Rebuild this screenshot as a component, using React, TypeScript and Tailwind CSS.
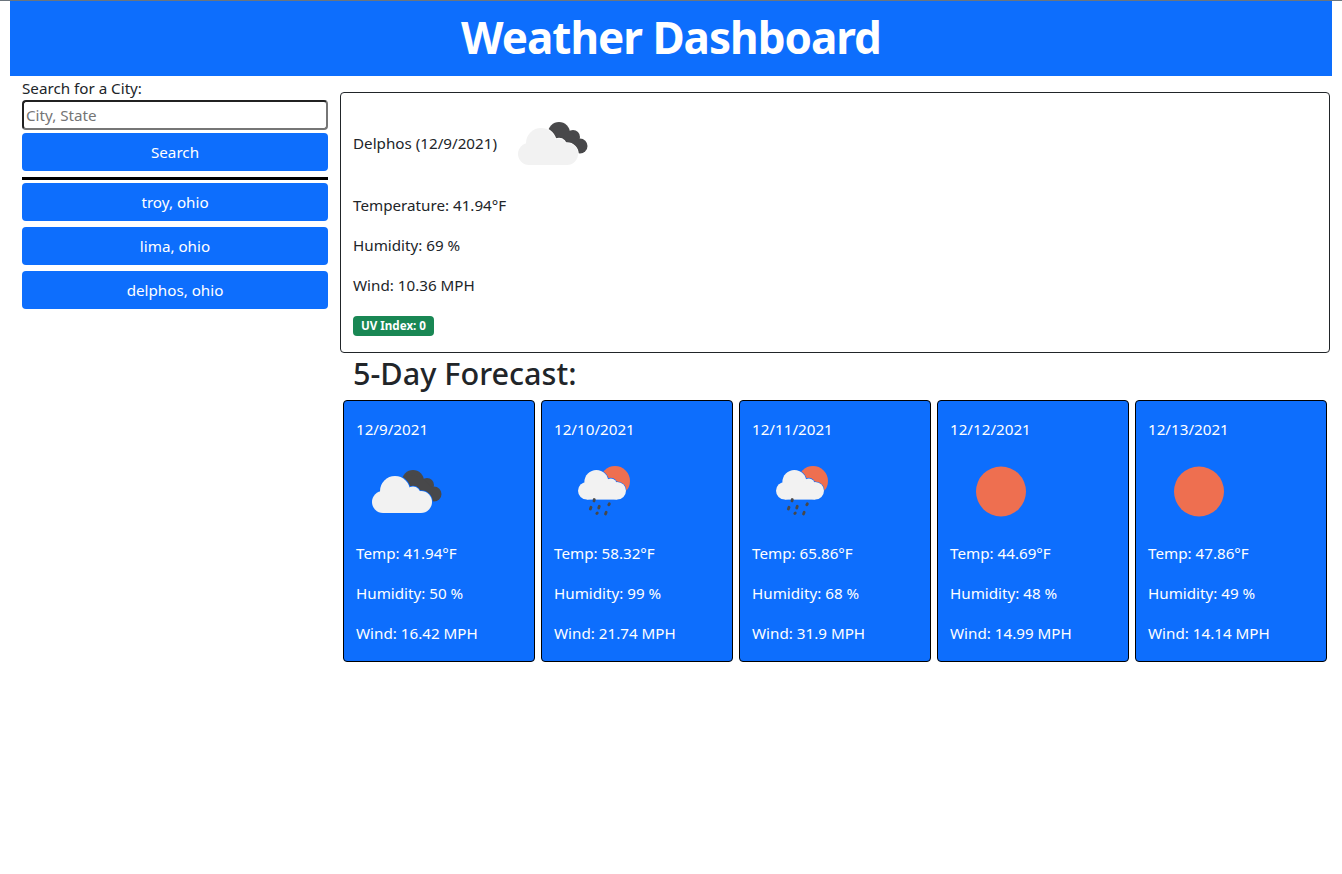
const font = "[font-family:'Noto_Sans','Open_Sans',sans-serif]";

const FORECAST = [
  { date: '12/9/2021', icon: 'clouds', temp: '41.94', humidity: '50', wind: '16.42' },
  { date: '12/10/2021', icon: 'rain', temp: '58.32', humidity: '99', wind: '21.74' },
  { date: '12/11/2021', icon: 'rain', temp: '65.86', humidity: '68', wind: '31.9' },
  { date: '12/12/2021', icon: 'sun', temp: '44.69', humidity: '48', wind: '14.99' },
  { date: '12/13/2021', icon: 'sun', temp: '47.86', humidity: '49', wind: '14.14' },
];

const CITIES = ['troy, ohio', 'lima, ohio', 'delphos, ohio'];

// white cloud, drawn twice: once fat in the background colour for the gap
function CloudShape({ fill, stroke = 0 }: { fill: string; stroke?: number }) {
  return (
    <g fill={fill} stroke={stroke ? fill : 'none'} strokeWidth={stroke}>
      <circle cx="27" cy="61" r="11" />
      <circle cx="39" cy="50" r="15" />
      <circle cx="57" cy="53" r="7.500" />
      <circle cx="65" cy="61" r="11" />
      <rect x="27" y="55" width="38" height="17" />
    </g>
  );
}

function WeatherIcon({ kind, bg }: { kind: string; bg: string }) {
  if (kind === 'sun') {
    return (
      <svg viewBox="0 0 100 100" className="w-[100px] h-[100px] shrink-0">
        <circle cx="51" cy="50.500" r="25" fill="#EE6F50" />
      </svg>
    );
  }
  if (kind === 'rain') {
    return (
      <svg viewBox="0 0 100 100" className="w-[100px] h-[100px] shrink-0">
        <circle cx="61" cy="40" r="15" fill="#EE6F50" />
        <g transform="translate(11.200 1) scale(0.8)">
          <CloudShape fill={bg} stroke={1.500} />
          <CloudShape fill="#F2F2F2" />
        </g>
        <g stroke="#48484A" strokeWidth="2.800" strokeLinecap="round">
          <path d="M40.300 58.500 40 60" />
          <path d="M37 66.300 36.400 68" />
          <path d="M45.300 65.300 44.700 67" />
          <path d="M55.300 62.800 54.800 63.800" />
          <path d="M43.300 72 42.800 72.500" />
          <path d="M52.200 71.300 51.500 73" />
        </g>
      </svg>
    );
  }
  return (
    <svg viewBox="0 0 100 100" className="w-[100px] h-[100px] shrink-0">
      <g fill="#48484A">
        <circle cx="57" cy="40" r="11" />
        <circle cx="71" cy="44" r="7" />
        <circle cx="78" cy="53" r="7.500" />
        <path d="M50 33 65 36 76 46 78 60 60 55z" />
      </g>
      <CloudShape fill={bg} stroke={1.500} />
      <CloudShape fill="#F2F2F2" />
    </svg>
  );
}

export default function App() {
  return (
    <div className={`min-h-screen bg-white text-[#212529] text-[15.2px] leading-6 ${font}`}>
      <div className="h-px bg-[#6c757d]" />
      <header className="mx-[10px] h-[75px] pb-[3px] bg-[#0D6EFD] flex items-center justify-center">
        <h1 className="text-[44px] tracking-[-1px] font-bold text-white leading-none">Weather Dashboard</h1>
      </header>

      <div className="mx-[10px] flex">
        {/* search column */}
        <aside className="w-[330px] shrink-0 px-3">
          <label className="block h-[24px] leading-6">Search for a City:</label>
          <input
            placeholder="City, State"
            className={`block w-full h-[30px] px-[2px] rounded-[4px] border-2 border-t-[#212121] border-l-[#212121] border-r-[#767676] border-b-[#767676] placeholder:text-[#757575] outline-none ${font}`}
          />
          <button className="mt-[3px] block w-full h-[38px] rounded-[4px] bg-[#0D6EFD] text-white">Search</button>
          <div className="mt-[6px] h-[3px] bg-black" />
          <div className="mt-[3px] flex flex-col gap-[6px]">
            {CITIES.map((city) => (
              <button key={city} className="w-full h-[38px] rounded-[4px] bg-[#0D6EFD] text-white">
                {city}
              </button>
            ))}
          </div>
        </aside>

        {/* current + forecast */}
        <main className="w-[990px] shrink-0 pt-4">
          <section className="h-[261px] border border-[#212529] rounded-[4px] px-3">
            <div className="flex items-center gap-[5px]">
              <span>Delphos (12/9/2021)</span>
              <WeatherIcon kind="clouds" bg="#ffffff" />
            </div>
            <p>Temperature: 41.94°F</p>
            <p className="mt-4">Humidity: 69 %</p>
            <p className="mt-4">Wind: 10.36 MPH</p>
            <span className="mt-[19px] flex items-center justify-center w-[81px] h-5 rounded-[4px] bg-[#198754] text-white text-[11.6px] font-bold leading-none">
              UV Index: 0
            </span>
          </section>

          <h2 className="pl-[13px] h-[47px] text-[30.6px] font-medium leading-[40px]">5-Day Forecast:</h2>

          <div className="flex gap-[6px] px-[3px]">
            {FORECAST.map((day) => (
              <div
                key={day.date}
                className="w-[192px] h-[262px] border border-black rounded-[4px] bg-[#0D6EFD] text-white px-3 pt-4"
              >
                <p>{day.date}</p>
                <WeatherIcon kind={day.icon} bg="#0D6EFD" />
                <p>Temp: {day.temp}°F</p>
                <p className="mt-4">Humidity: {day.humidity} %</p>
                <p className="mt-4">Wind: {day.wind} MPH</p>
              </div>
            ))}
          </div>
        </main>
      </div>
    </div>
  );
}
